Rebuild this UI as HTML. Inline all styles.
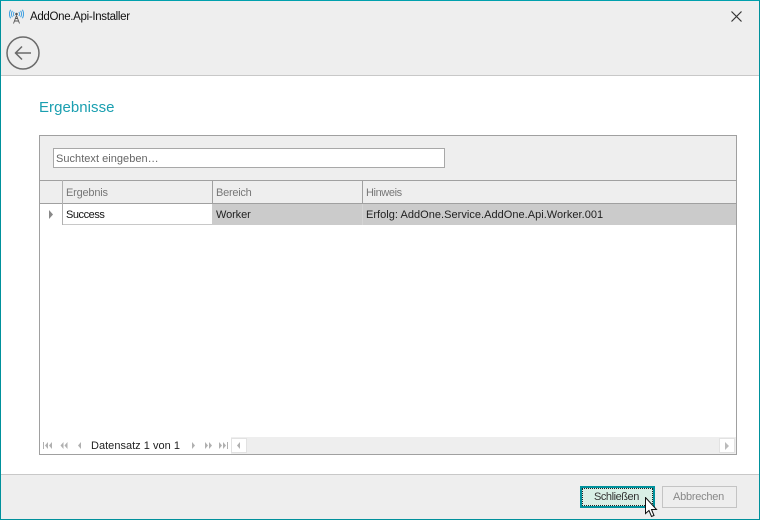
<!DOCTYPE html>
<html><head><meta charset="utf-8"><style>
html,body{margin:0;padding:0;background:#fff}
body{width:760px;height:520px;position:relative;overflow:hidden;font-family:"Liberation Sans",sans-serif;font-size:11px;color:#222}
.a{position:absolute;box-sizing:border-box}
.t{position:absolute;white-space:nowrap;line-height:14px}
</style></head><body>
<div class="a" style="left:0;top:0;width:760px;height:75px;background:#eee"></div>
<div class="a" style="left:0;top:75px;width:760px;height:1px;background:#c8c8c8"></div>
<svg class="a" style="left:9px;top:9px" width="15" height="15" viewBox="0 0 15 15" fill="none">
<path d="M7.500 6.500L4.500 14.500M7.500 6.500l3 8M5.500 12h4M6.500 9.500h2" stroke="#555" stroke-width=".9"/><circle cx="7.500" cy="5" r="1.300" fill="#555"/>
<path d="M5.200 3a3 3 0 0 0 0 4M9.800 3a3 3 0 0 1 0 4M3.400 1.800a6 6 0 0 0 0 6.400M11.600 1.800a6 6 0 0 1 0 6.400M1.600.800a8.500 8.500 0 0 0 0 8.400M13.400.800a8.500 8.500 0 0 1 0 8.400" stroke="#3f9fe0" stroke-width="1"/></svg>
<div class="t" style="left:30px;top:10px;font-size:11.5px;color:#111;letter-spacing:-.32px">AddOne.Api-Installer</div>
<svg class="a" style="left:731px;top:11px" width="11" height="11" viewBox="0 0 11 11"><path d="M.5.500l10 10M10.500.500l-10 10" stroke="#333" stroke-width="1.200"/></svg>
<svg class="a" style="left:6px;top:36px" width="34" height="34" viewBox="0 0 34 34" fill="none"><circle cx="17" cy="17" r="16" stroke="#6a6a6a" stroke-width="1.500"/><path d="M25 17H9.500M16 10.500L9.500 17l6.500 6.500" stroke="#6a6a6a" stroke-width="1.500"/></svg>
<div class="t" style="left:39px;top:99px;font-size:15px;line-height:18px;color:#1a9fb0;letter-spacing:.05px">Ergebnisse</div>

<div class="a" style="left:39px;top:135px;width:698px;height:320px;border:1px solid #a0a0a0;background:#fff"></div>
<div class="a" style="left:40px;top:136px;width:696px;height:44px;background:#eee"></div>
<div class="a" style="left:53px;top:148px;width:392px;height:20px;background:#fff;border:1px solid #a8a8a8"></div>
<div class="t" style="left:56px;top:152px;color:#666;letter-spacing:.03px">Suchtext eingeben…</div>

<div class="a" style="left:40px;top:180px;width:696px;height:24px;background:#eee;border-top:1px solid #a0a0a0;border-bottom:1px solid #a0a0a0"></div>
<div class="a" style="left:62px;top:180px;width:1px;height:45px;background:#b0b0b0"></div>
<div class="a" style="left:212px;top:180px;width:1px;height:24px;background:#a0a0a0"></div>
<div class="a" style="left:362px;top:180px;width:1px;height:24px;background:#a0a0a0"></div>
<div class="t" style="left:66px;top:186px;color:#777;letter-spacing:-.2px">Ergebnis</div>
<div class="t" style="left:216px;top:186px;color:#777;letter-spacing:-.25px">Bereich</div>
<div class="t" style="left:366px;top:186px;color:#777;letter-spacing:-.4px">Hinweis</div>

<div class="a" style="left:212px;top:204px;width:524px;height:21px;background:#cbcbcb"></div>
<div class="a" style="left:63px;top:224px;width:149px;height:1px;background:#c8c8c8"></div>
<div class="a" style="left:362px;top:204px;width:1px;height:21px;background:#d4d4d4"></div>
<svg class="a" style="left:49px;top:210px" width="5" height="9"><path d="M0 0l4 4.500-4 4.500z" fill="#888"/></svg>
<div class="t" style="left:66px;top:208px;color:#111;letter-spacing:-.45px">Success</div>
<div class="t" style="left:216px;top:208px;color:#222;letter-spacing:-.1px">Worker</div>
<div class="t" style="left:366px;top:208px;color:#222;letter-spacing:.03px">Erfolg: AddOne.Service.AddOne.Api.Worker.001</div>

<div class="a" style="left:231px;top:437px;width:505px;height:17px;background:#eee"></div>
<div class="a" style="left:231px;top:438px;width:16px;height:15px;background:#fff;border:1px solid #e2e2e2"></div>
<div class="a" style="left:719px;top:438px;width:16px;height:15px;background:#fff;border:1px solid #e2e2e2"></div>
<svg class="a" style="left:40px;top:442px" width="200" height="8" fill="#b0b0b0">
<path d="M3 0h1v7H3zM8 0v7L5 3.500zM12 0v7L9 3.500z"/>
<path d="M23.500 0v7l-3-3.500zM27.500 0v7l-3-3.500z"/>
<path d="M41 0v7l-3-3.500z"/>
<path d="M152 0v7l3-3.500z"/>
<path d="M165 0v7l3-3.500zM169 0v7l3-3.500z"/>
<path d="M179 0v7l3-3.500zM183 0v7l3-3.500zM187 0h1v7h-1z"/>
<path d="M200 0v7l-3-3.500z"/>
</svg>
<svg class="a" style="left:725px;top:442px" width="5" height="8" fill="#bbb"><path d="M0 0v8l4-4z"/></svg>
<div class="t" style="left:91px;top:439px;color:#222;letter-spacing:.02px">Datensatz 1 von 1</div>

<div class="a" style="left:0;top:474px;width:760px;height:1px;background:#c8c8c8"></div>
<div class="a" style="left:0;top:475px;width:760px;height:45px;background:#eee"></div>
<div class="a" style="left:580px;top:486px;width:75px;height:22px;background:#d9efe6;border:2px solid #00919c;outline:1px dotted #222;outline-offset:-3px"></div>
<div class="t" style="left:594px;top:490px;color:#333;letter-spacing:-.45px">Schließen</div>
<div class="a" style="left:662px;top:486px;width:75px;height:22px;background:#eee;border:1px solid #c4c4c4"></div>
<div class="t" style="left:673px;top:490px;color:#888;letter-spacing:-.25px">Abbrechen</div>
<svg class="a" style="left:645px;top:497px" width="14" height="21" viewBox="0 0 14 21"><path d="M.5.500v16l3.500-3 2.500 6 2.500-1-2.500-6h5z" fill="#fff" stroke="#111" stroke-width="1"/></svg>

<div class="a" style="left:0;top:0;width:760px;height:520px;border:1px solid #00919c;border-top:1px solid #00a0ad"></div>
</body></html>
